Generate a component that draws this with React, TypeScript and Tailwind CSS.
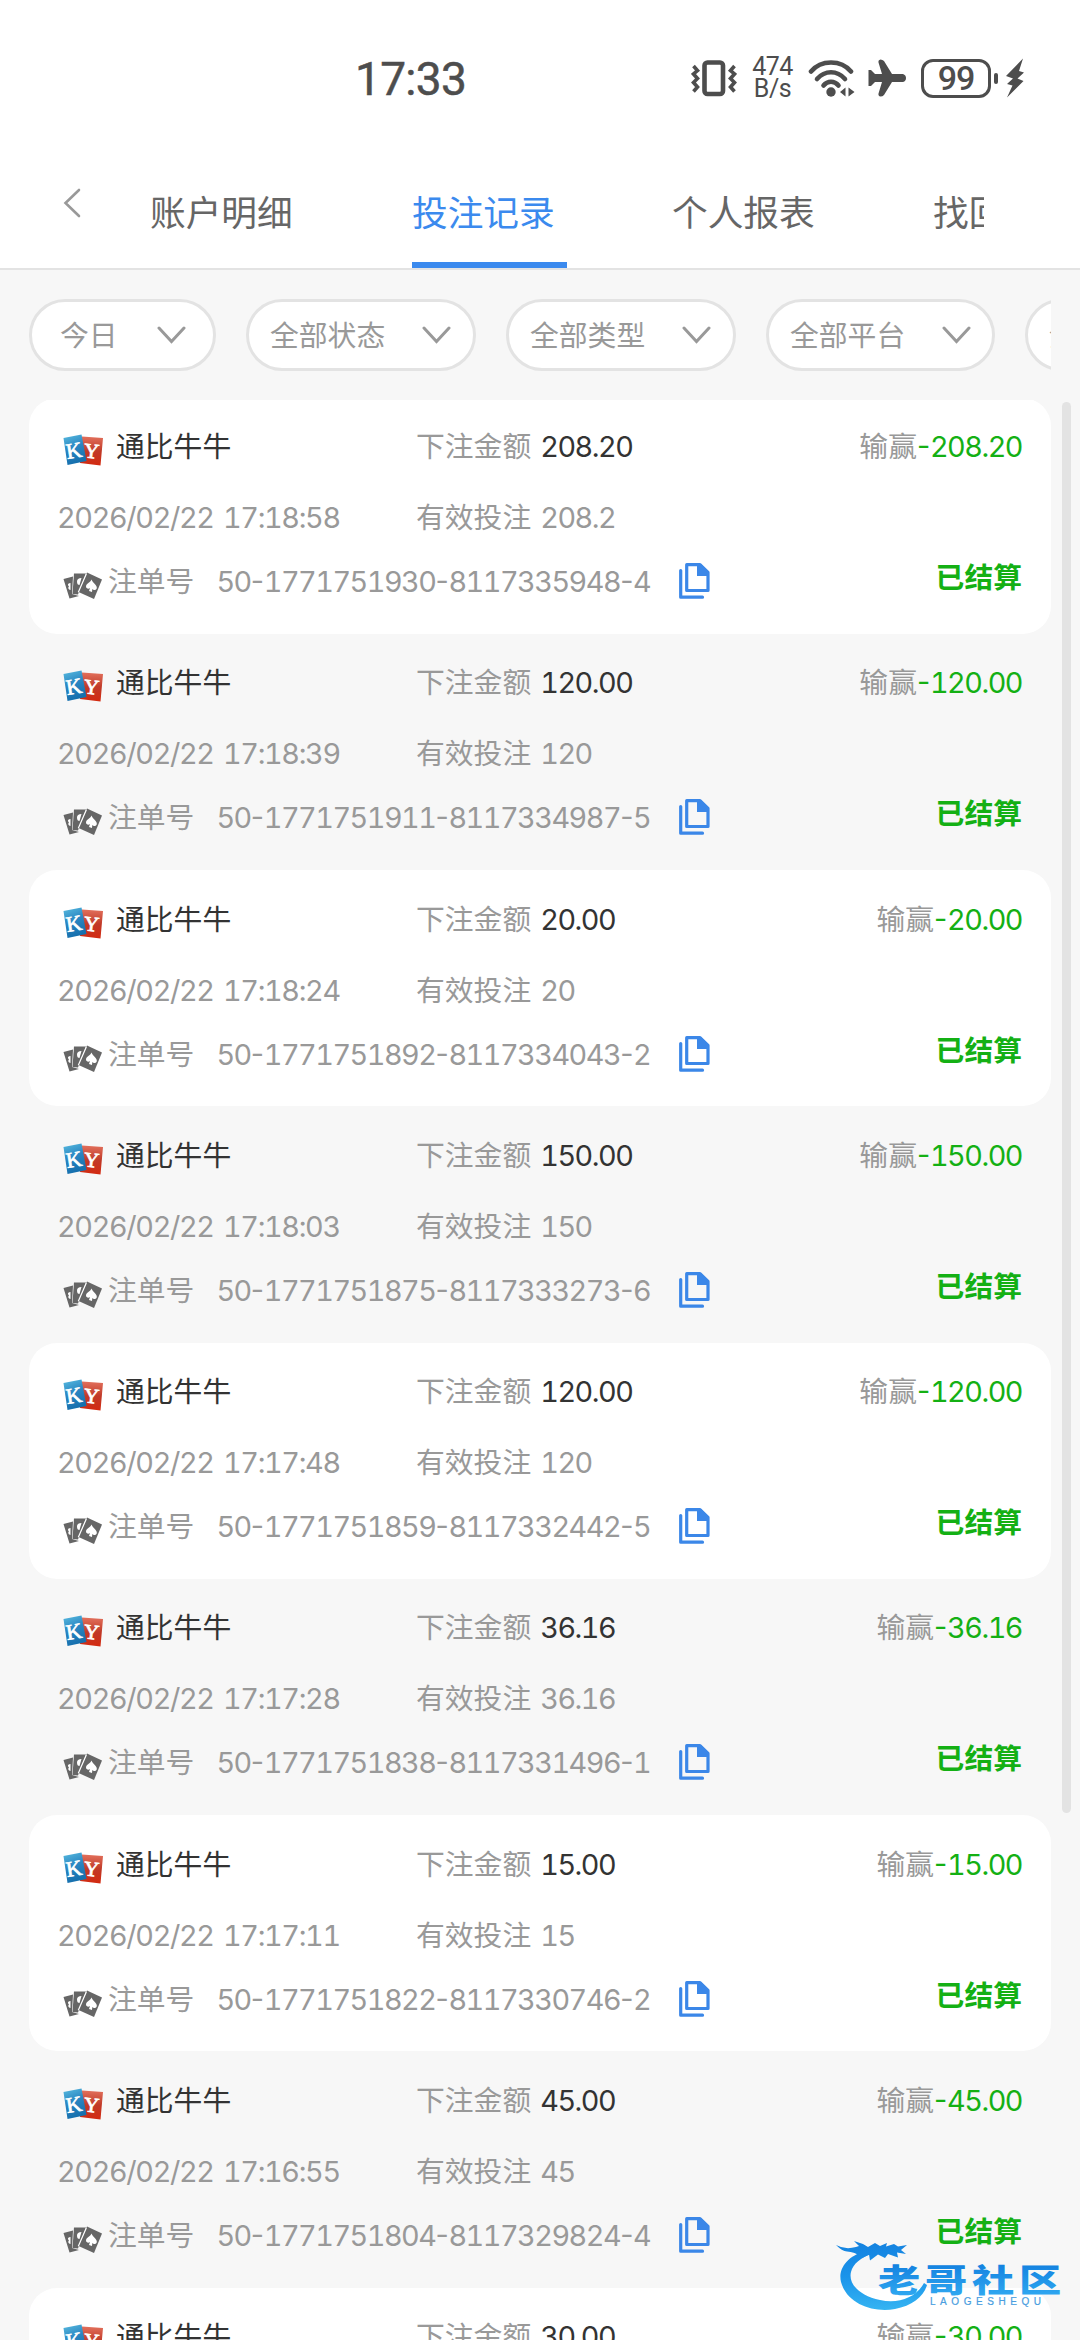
const font = "font-['Inter','Noto_Sans_CJK_SC',sans-serif]";

const tabs = ["账户明细", "投注记录", "个人报表", "找回注单"];

const filters = [
  { label: "今日", size: "w-[187px] pl-[28px] pr-[27px]" },
  { label: "全部状态", size: "w-[230px] pl-[21px] pr-[22px]" },
  { label: "全部类型", size: "w-[230px] pl-[21px] pr-[22px]" },
  { label: "全部平台", size: "w-[229px] pl-[21px] pr-[21px]" },
  { label: "全部游戏", size: "w-[230px] pl-[21px] pr-[22px]" },
];

const records = [
  { time: "2026/02/22 17:18:58", bet: "208.20", valid: "208.2", no: "50-1771751930-8117335948-4" },
  { time: "2026/02/22 17:18:39", bet: "120.00", valid: "120", no: "50-1771751911-8117334987-5" },
  { time: "2026/02/22 17:18:24", bet: "20.00", valid: "20", no: "50-1771751892-8117334043-2" },
  { time: "2026/02/22 17:18:03", bet: "150.00", valid: "150", no: "50-1771751875-8117333273-6" },
  { time: "2026/02/22 17:17:48", bet: "120.00", valid: "120", no: "50-1771751859-8117332442-5" },
  { time: "2026/02/22 17:17:28", bet: "36.16", valid: "36.16", no: "50-1771751838-8117331496-1" },
  { time: "2026/02/22 17:17:11", bet: "15.00", valid: "15", no: "50-1771751822-8117330746-2" },
  { time: "2026/02/22 17:16:55", bet: "45.00", valid: "45", no: "50-1771751804-8117329824-4" },
  { time: "2026/02/22 17:16:38", bet: "30.00", valid: "30", no: "50-1771751787-8117328960-3" },
];

const StatusBar = () => {
  return (
    <div className="flex h-[156px] items-start justify-between pt-[58px] pl-[355px] pr-[55px] text-[#4d4d4d]">
      <span className="mt-[-2px] font-['Roboto'] text-[46px] leading-[46px] tracking-[-0.700px] [-webkit-text-stroke:0.5px_#4d4d4d]">17:33</span>
      <div className="flex h-[40px] items-center">
        <svg width="46" height="38" viewBox="0 0 46 38" fill="none" stroke="currentColor">
          <rect x="13.500" y="3.500" width="18.500" height="31.500" rx="3" strokeWidth="4.600" />
          <path d="M2.500 7l4 4.500-4 3.500 4 4.500-4 4 4 4.500-4 4.500M43.500 7l-4 4.500 4 3.500-4 4.500 4 4-4 4.500 4 4.500" strokeWidth="3.600" />
        </svg>
        <div className="ml-[15px] w-[41px] text-center font-['Roboto'] text-[25px] leading-[22px] tracking-[-0.500px]">
          <div>474</div>
          <div>B/s</div>
        </div>
        <svg className="ml-[15px]" width="48" height="38" viewBox="0 0 48 38" fill="none" stroke="currentColor" strokeWidth="4.600" strokeLinecap="round">
          <path d="M3 12.500C13 0.500 33 0.500 43 12.500" />
          <path d="M9 20c8-9 20-9 28 0" />
          <path d="M15.500 26.500c4-5 11-5 15 0" />
          <circle cx="23" cy="33" r="4.700" fill="currentColor" stroke="none" />
          <path d="M37.500 28.500v9L32 33zM40.500 28.500v9l6-4.500z" fill="currentColor" stroke="none" />
        </svg>
        <svg className="ml-[12px]" width="38" height="40" viewBox="0 0 38 40" fill="currentColor">
          <path d="M35 16H24L16 3Q14.500 1.500 12.500 1.500 10 2 10.500 4.500L14 16H7L3 12H0.500V28H3L7 24H14L10.500 35.500Q10 38 12.500 38.500 14.500 38.500 16 37L24 24H35Q38 23 38 20T35 16Z" />
        </svg>
        <div className="ml-[15px] flex h-[39px] w-[70px] items-center justify-center rounded-[12px] border-[3px] border-[#4d4d4d] font-['Roboto'] text-[34px] leading-[33px] font-medium tracking-[-1px]">
          99
        </div>
        <div className="ml-[3px] h-[11px] w-[4px] rounded-full bg-[#4d4d4d]" />
        <svg className="ml-[7px]" width="20" height="40" viewBox="0 0 20 40" fill="currentColor">
          <path d="M18 0.500L1 18l7 2.500L2 26l5.500 1.500L2 39.500 18.500 23l-6-2.500L19 14.500l-5-1.500z" />
        </svg>
      </div>
    </div>
  );
};

const KyIcon = () => {
  return (
    <svg width="40" height="32" viewBox="0 0 40 32">
      <defs>
        <linearGradient id="kyBlue" x1="0" y1="0" x2="0.300" y2="1">
          <stop offset="0" stopColor="#58bce0" />
          <stop offset="0.500" stopColor="#2b86c2" />
          <stop offset="1" stopColor="#1670ae" />
        </linearGradient>
        <linearGradient id="kyRed" x1="0" y1="0" x2="0" y2="1">
          <stop offset="0" stopColor="#e2705c" />
          <stop offset="0.500" stopColor="#c03a28" />
          <stop offset="1" stopColor="#d42a10" />
        </linearGradient>
      </defs>
      <path d="M19 2.500L40 4 37.500 31.500 17 29z" fill="url(#kyRed)" />
      <path d="M0.500 4L18.500 0.500 23.500 27 4.500 31z" fill="url(#kyBlue)" />
      <text x="3" y="24" fontSize="22" fontFamily="Liberation Serif" fill="#fff" stroke="#fff" strokeWidth="0.700" transform="rotate(-9 10 16)">K</text>
      <text x="21" y="24" fontSize="21" fontFamily="Liberation Serif" fill="#fff" stroke="#fff" strokeWidth="0.700" transform="rotate(6 28 16)">Y</text>
    </svg>
  );
};

const CardsIcon = () => {
  return (
    <svg width="40" height="28" viewBox="0 0 40 28" fill="#666">
      <path d="M0.500 7L10 4.500 9 22 16 24 6.500 26.500z" />
      <path d="M11 1.500h12L15 22.500 9.500 22z" />
      <path d="M24 0.500L39 7.500 31 27 15.500 20z" />
      <path d="M23.300 2L15.300 20.300" stroke="#fff" strokeWidth="1.200" />
      <path d="M7.500 11q-3 0-2.500 2.500l1 .5q-2 3 1.500 4zM18.500 6q-4.500 0-4.500 3.500T16.500 13z" fill="#fff" />
      <path d="M28.500 7.500c-1 3-5.500 4-5.500 7 0 2 2.500 2.800 4 1.500l-1 3 3 1 .3-3c1.200 1.800 4.200 1.200 4.500-1 .5-3-4-5-5.300-8.500z" fill="#fff" />
    </svg>
  );
};

const CopyIcon = () => {
  return (
    <svg width="31" height="36" viewBox="0 0 31 36" fill="none" stroke="#3b87e8" strokeWidth="3.200">
      <path d="M7.700 1.700H21L29 9.500V27.500H7.700z" strokeLinejoin="round" />
      <path d="M18 1h4L30 9v4H18z" fill="#3b87e8" stroke="none" />
      <path d="M1.700 7.500V34.200H23.500" strokeLinecap="round" strokeLinejoin="round" />
    </svg>
  );
};

// digits share one width, the hyphen keeps its own
const Dashed = ({ text }: { text: string }) => {
  return (
    <>
      {text.split(/(-)/).map((part, i) =>
        part === "-" ? (
          <span key={i} className="tracking-[-0.300px] normal-nums [font-feature-settings:'case']">
            -
          </span>
        ) : (
          part
        )
      )}
    </>
  );
};

const Watermark = () => {
  return (
    <svg className="absolute top-[2234px] left-[836px]" width="230" height="80" viewBox="0 0 230 80">
      <defs>
        <linearGradient id="wm" gradientUnits="userSpaceOnUse" x1="0" y1="8" x2="0" y2="76">
          <stop offset="0" stopColor="#1482e0" />
          <stop offset="0.500" stopColor="#1a93ea" />
          <stop offset="1" stopColor="#35b4f2" />
        </linearGradient>
        <linearGradient id="wmText" x1="0" y1="0" x2="0" y2="1">
          <stop offset="0.200" stopColor="#1482e0" />
          <stop offset="0.850" stopColor="#2ea6f0" />
        </linearGradient>
      </defs>
      <g fill="url(#wm)">
        <path d="M30 17C10 22 2 36 5 48c6 22 32 31 54 27 17-3 29-13 32-24l-3-2C80 64 62 70 44 66 24 62 12 50 15 38c2-8 10-15 21-18z" />
        <path d="M0 11q9 5 20 2l3-1-5-5q8 2 14 6l7-4 5 3 7-3-1 3.500 8-2.500 4 2.500 9-1.500-6 5 5 4-9-1.500 1 5-10-3.500-3 4-7-3.500-8 6-1-6-6 3q-9-6-16-6Q6 17 0 11z" />
      </g>
      <g transform="translate(42 58) scale(1.320 1)">
        <text x="0" y="0" fontSize="32" fontWeight="900" fontFamily="Noto Sans CJK SC" fill="url(#wmText)" letterSpacing="3.600">老哥社区</text>
      </g>
      <text x="94" y="71" fontSize="10" fontFamily="Liberation Sans" fill="#4a9ee0" stroke="#4a9ee0" strokeWidth="0.200" textLength="111" lengthAdjust="spacing">LAOGESHEQU</text>
    </svg>
  );
};

export default function App() {
  return (
    <div className={`relative flex h-[2340px] w-[1080px] flex-col overflow-hidden bg-[#f7f7f7] ${font}`}>
      <header className="shrink-0 border-b-2 border-[#e3e3e3] bg-white">
        <StatusBar />
        <div className="flex h-[112px]">
          <svg className="mt-[32px] ml-[63px] shrink-0" width="18" height="30" viewBox="0 0 18 30" fill="none" stroke="#999" strokeWidth="2.600" strokeLinecap="round">
            <path d="M16 2L2.500 15 16 28" />
          </svg>
          <nav className="ml-[69px] flex w-[834px] overflow-hidden">
            {tabs.map((tab, i) => (
              <div key={tab} className="w-[261px] shrink-0">
                <div
                  className={
                    i === 1
                      ? "ml-[1px] h-[112px] w-[155px] border-b-[6px] border-[#3b8aee] pt-[31px] text-[35.700px] leading-[52px] text-[#3b8aee]"
                      : "pt-[31px] text-[35.700px] leading-[52px] whitespace-nowrap text-[#666]"
                  }
                >
                  {tab}
                </div>
              </div>
            ))}
          </nav>
        </div>
      </header>

      <div className="mt-[29px] ml-[29px] flex w-[1022px] shrink-0 gap-[30px] overflow-hidden">
        {filters.map((f) => (
          <div
            key={f.label}
            className={`flex h-[72px] shrink-0 items-center justify-between rounded-full border-[3px] border-[#e3e3e3] bg-white text-[28.800px] leading-[40px] text-[#999] ${f.size}`}
          >
            <span className="pt-[1px]">{f.label}</span>
            <svg width="29" height="18" viewBox="0 0 29 18" fill="none" stroke="#999" strokeWidth="3" strokeLinecap="round">
              <path d="M2 2l12.500 13.500L27 2" />
            </svg>
          </div>
        ))}
      </div>

      <main className="mt-[29px] flex h-[1941px] shrink-0 overflow-hidden">
        <div className="mt-[-2.500px] ml-[29px] w-[1022px]">
          {records.map((r, i) => (
            <div
              key={r.no}
              className={`h-[236.250px] rounded-[28px] px-[29px] text-[28.800px] leading-[40px] whitespace-nowrap text-[#999] tabular-nums ${i % 2 === 0 ? "bg-white" : ""}`}
            >
              <div className="flex h-[87.500px] items-start pt-[29.500px]">
                <div className="flex w-[358px]">
                  <div className="mt-[7px] mr-[13px] ml-[5px]">
                    <KyIcon />
                  </div>
                  <span className="text-[#333]">通比牛牛</span>
                </div>
                <span>下注金额</span>
                <span className="ml-[9px] tracking-[-1.500px] text-[#333]">{r.bet}</span>
                <span className="ml-auto">输赢</span>
                <span className="tracking-[-1.500px] text-[#14b014]">
                  <Dashed text={`-${r.bet}`} />
                </span>
              </div>
              <div className="flex h-[68px] items-start pt-[13px]">
                <span className="-ml-px w-[359px] tracking-[-1.350px] [word-spacing:3px]">{r.time}</span>
                <span>有效投注</span>
                <span className="ml-[9px] tracking-[-1.500px]">{r.valid}</span>
              </div>
              <div className="flex items-start pt-[9px]">
                <div className="mt-[10px] mr-[5px] ml-[5px]">
                  <CardsIcon />
                </div>
                <span>注单号</span>
                <span className="ml-[22px] w-[463px] tracking-[-1.500px]">
                  <Dashed text={r.no} />
                </span>
                <div className="mt-[1px]">
                  <CopyIcon />
                </div>
                <span className="mt-[-4px] ml-auto font-bold text-[#14b014]">已结算</span>
              </div>
            </div>
          ))}
        </div>
        <div className="mt-[2px] ml-[11px] h-[1411px] w-[9px] rounded-full bg-[#e3e3e3]" />
      </main>
      <Watermark />
    </div>
  );
}
